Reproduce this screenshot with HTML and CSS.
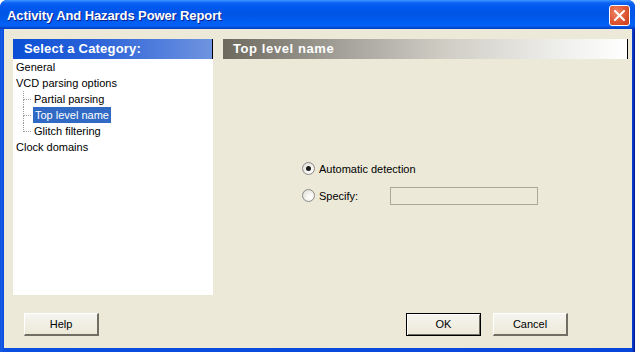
FILE: index.html
```html
<!DOCTYPE html>
<html>
<head>
	<meta charset="UTF-8"/>
	<link rel="stylesheet" href="styles.css">
</head>
<body>
<div class="window">
	<div class="titlebar">
		<span class="title">Activity And Hazards Power Report</span>
		<a href="javascript:" class="close">
			<svg width="11" height="11" viewBox="0 0 11 11"><path d="M1 1L10 10M10 1L1 10" stroke="#fff" stroke-width="2" stroke-linecap="square"/></svg>
		</a>
	</div>
	<div class="client">
		<div class="main">
			<div class="category">
				<div class="cathead">Select a Category:</div>
				<ul class="tree">
					<li><span>General</span></li>
					<li><span>VCD parsing options</span>
						<ul class="sub">
							<li><span>Partial parsing</span></li>
							<li><span class="on">Top level name</span></li>
							<li><span>Glitch filtering</span></li>
						</ul>
					</li>
					<li><span>Clock domains</span></li>
				</ul>
			</div>
			<div class="pane">
				<div class="panehead">Top level name</div>
				<div class="options">
					<div class="row">
						<span class="radio checked"></span>
						<span class="label">Automatic detection</span>
					</div>
					<div class="row">
						<span class="radio"></span>
						<span class="label spec">Specify:</span>
						<span class="textbox"></span>
					</div>
				</div>
			</div>
		</div>
		<div class="footer">
			<a href="javascript:" class="btn">Help</a>
			<span class="spacer"></span>
			<a href="javascript:" class="btn default">OK</a>
			<a href="javascript:" class="btn">Cancel</a>
		</div>
	</div>
</div>
</body>
</html>
```

FILE: styles.css
```css
*{
	border:0;
	padding:0;
	margin:0;
	text-decoration:none;
	box-sizing:border-box;
}
body{
	width:635px;
	height:352px;
	overflow:hidden;
	font-family:"Liberation Sans",Arial,sans-serif;
	font-size:11px;
	color:#000;
}
.window{
	width:635px;
	height:352px;
	display:flex;
	flex-direction:column;
	background:linear-gradient(to right,#0842d4 0,#1d63e8 1px,#0a4fe0 3px,#0846db 631px,#0a3bc9 633px,#00138c 635px);
	border-radius:7px 7px 0 0;
}
.titlebar{
	height:29px;
	display:flex;
	align-items:center;
	padding:0 5px 0 7px;
	border-radius:7px 7px 0 0;
	background:linear-gradient(#3d95ff 0,#0a62f4 3px,#0058ee 7px,#0055e6 14px,#0060f6 24px,#0860f0 26px,#0045d0 28px,#003dc4 29px);
}
.title{
	flex:1;
	color:#fff;
	font-weight:bold;
	font-size:13px;
	letter-spacing:-0.1px;
	text-shadow:1px 1px 0 #0a1e8c;
	padding-top:1px;
}
.close{
	width:21px;
	height:21px;
	border:1px solid #fff;
	border-radius:3px;
	background:radial-gradient(circle at 35% 35%,#f08a6a 0,#e15d3a 45%,#c83a1a 100%);
	display:flex;
	align-items:center;
	justify-content:center;
	margin-top:2px;
}
.client{
	flex:1;
	margin:0 3px 4px 4px;
	background:#ece9d8;
	display:flex;
	flex-direction:column;
	padding:10px 0 0 9px;
}
.main{
	display:flex;
	gap:10px;
	height:256px;
}
.category{
	width:200px;
	background:#fff;
}
.cathead{
	height:20px;
	line-height:20px;
	padding-left:11px;
	color:#fff;
	font-weight:bold;
	font-size:13px;
	letter-spacing:0.2px;
	background:linear-gradient(to right,#0a4fd6 0,#2a62d8 40%,#6f94e0 100%);
	border-right:1px solid #000;
}
.tree{
	list-style:none;
	padding-left:2px;
}
.tree li{
	line-height:16px;
}
.tree span{
	display:inline-block;
	padding:0 2px 0 1px;
}
.sub{
	list-style:none;
	padding-left:18px;
}
.sub li{
	position:relative;
}
.sub li::before{
	content:"";
	position:absolute;
	left:-10px;
	top:0;
	width:7px;
	height:8px;
	border-left:1px dotted #9a9a9a;
	border-bottom:1px dotted #9a9a9a;
}
.sub li::after{
	content:"";
	position:absolute;
	left:-10px;
	top:8px;
	height:8px;
	border-left:1px dotted #9a9a9a;
}
.sub li:last-child::after{
	display:none;
}
.tree .on{
	background:#316ac5;
	color:#fff;
	padding:0 2px;
}
.pane{
	width:405px;
	display:flex;
	flex-direction:column;
}
.panehead{
	height:20px;
	line-height:20px;
	padding-left:10px;
	color:#fff;
	font-weight:bold;
	font-size:13px;
	letter-spacing:0.6px;
	background:linear-gradient(to right,#6d695f 0,#a4a29a 30%,#cfcdc4 55%,#f0f0ee 85%,#ffffff 100%);
	border-right:1px solid #000;
}
.options{
	padding:102px 0 0 79px;
	display:flex;
	flex-direction:column;
	gap:12px;
}
.row{
	display:flex;
	align-items:center;
	height:15px;
}
.radio{
	width:13px;
	height:13px;
	border-radius:50%;
	border:1px solid #8a8a8a;
	background:radial-gradient(circle at 65% 65%,#ffffff 0,#f4f3ee 40%,#d6d4cb 100%);
	display:flex;
	align-items:center;
	justify-content:center;
}
.checked::after{
	content:"";
	width:5px;
	height:5px;
	border-radius:50%;
	background:#1a1a1a;
}
.label{
	margin-left:4px;
}
.spec{
	width:71px;
}
.textbox{
	width:148px;
	height:18px;
	border:1px solid #aca899;
	background:#ece9d8;
}
.footer{
	display:flex;
	align-items:center;
	margin-top:18px;
	padding:0 64px 0 11px;
	gap:12px;
}
.spacer{
	flex:1;
}
.btn{
	width:75px;
	height:23px;
	line-height:21px;
	text-align:center;
	color:#000;
	font-size:11px;
	background:linear-gradient(#f6f5f0,#ece9d8);
	border-top:1px solid #fff;
	border-left:1px solid #fff;
	border-right:2px solid #716f64;
	border-bottom:2px solid #716f64;
}
.default{
	border:1px solid #000;
	box-shadow:inset 1px 1px 0 #fff,inset -1px -1px 0 #716f64;
}
```
